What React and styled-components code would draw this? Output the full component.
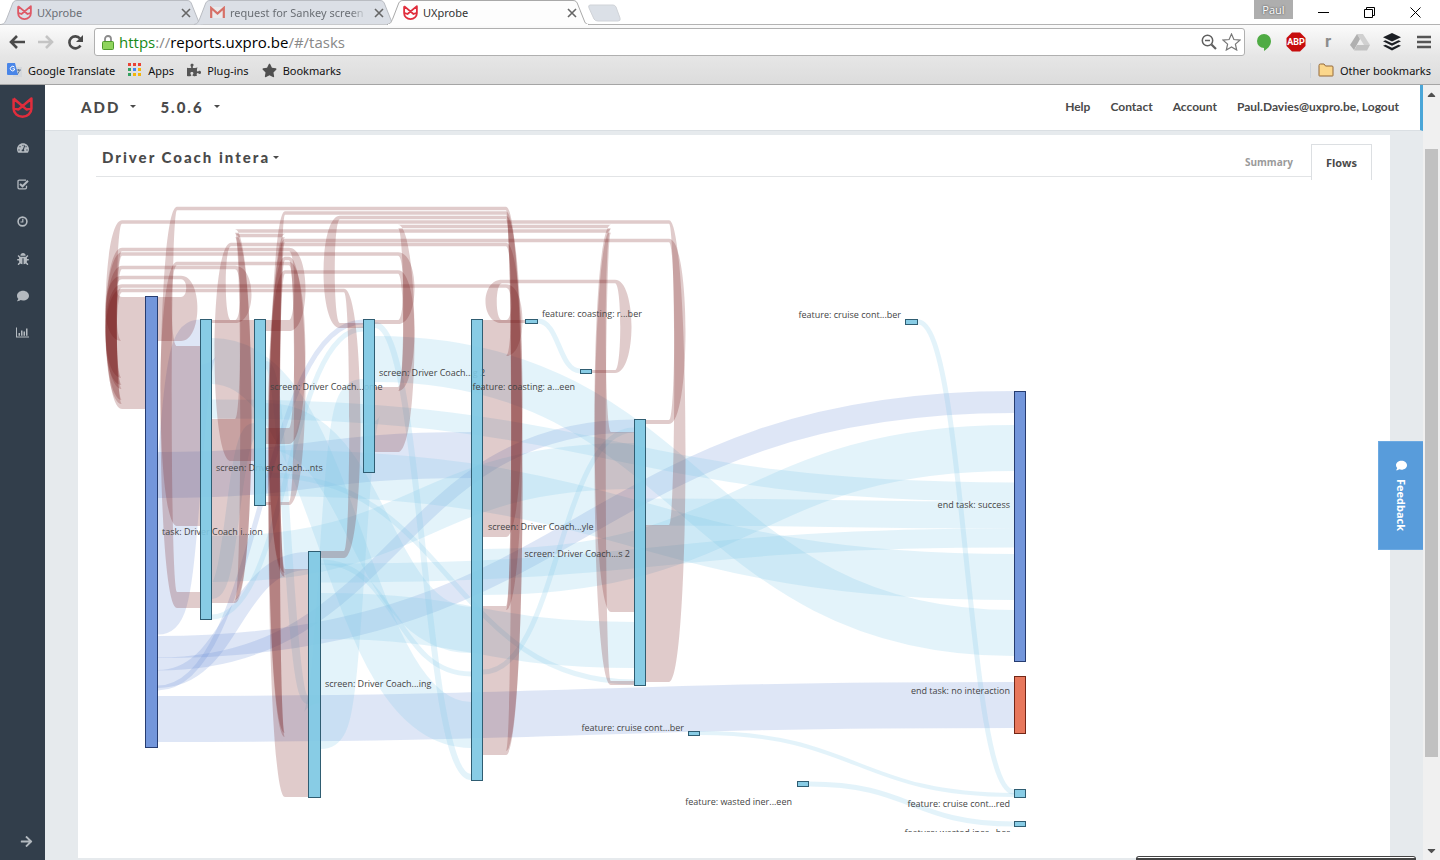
import React from "react";
import styled, { createGlobalStyle } from "styled-components";
import {
  FaTachometerAlt, FaBug, FaComment,
  FaArrowRight, FaPuzzlePiece, FaStar, FaCaretUp, FaCaretDown,
} from "react-icons/fa";

const Global = createGlobalStyle`
  *, *::before, *::after { box-sizing: border-box; }
  body { margin: 0; background: #fff; font-family: "Open Sans", "Noto Sans", sans-serif; }
  button, input { font: inherit; color: inherit; margin: 0; padding: 0; border: 0; background: none; }
  a { color: inherit; text-decoration: none; }
  svg { display: block; flex: none; }
`;

const Window = styled.div`
  height: 100vh;
  display: flex;
  flex-direction: column;
  overflow: hidden;
`;

/* ---------- browser frame ---------- */

const TabStrip = styled.div`
  height: 25px;
  flex: none;
  display: flex;
  align-items: flex-start;
  border-bottom: 1px solid #b3b3b3;
`;

const TabShell = styled.div`
  position: relative;
  width: 202px;
  height: 25px;
  display: flex;
  align-items: center;
  gap: 5px;
  padding: 0 9px 0 17px;
  margin-right: -9px;
  font-size: 11px;
  color: ${(p) => (p.$active ? "#333" : "#6a6e74")};
  z-index: ${(p) => (p.$active ? 2 : 1)};
  & > svg { z-index: 1; opacity: ${(p) => (p.$active ? 1 : 0.75)}; }
`;

const TabShape = styled.span`
  position: absolute;
  inset: 0;
  svg { width: 100%; height: 100%; overflow: visible; }
`;

const TabTitle = styled.span`
  z-index: 1;
  flex: 1;
  font-family: "Noto Sans", sans-serif;
  white-space: nowrap;
  overflow: hidden;
  ${(p) => p.$fade && "mask-image: linear-gradient(90deg, #000 88%, transparent);"}
`;

const IconButton = styled.button`
  z-index: 1;
  display: flex;
  align-items: center;
  justify-content: center;
  width: ${(p) => p.$w || 20}px;
  height: ${(p) => p.$h || 20}px;
  flex: none;
`;

const NewTab = styled(IconButton)`
  margin: 4px 0 0 8px;
`;

const WindowControls = styled.div`
  margin-left: auto;
  display: flex;
  gap: 26px;
  padding-right: 15px;
`;

const UserBadge = styled.button`
  width: 39px;
  height: 19px;
  margin-right: -6px;
  background: #aeaeae;
  color: #fff;
  font-size: 11px;
  line-height: 18px;
  text-shadow: 0 0 2px #333;
`;

const Toolbar = styled.div`
  height: 31px;
  flex: none;
  display: flex;
  align-items: center;
  gap: 9px;
  padding: 3px 6px 0 7px;
  background: linear-gradient(#fbfbfb, #e6e6e6);
`;

const AddressBar = styled.label`
  flex: 1;
  height: 28px;
  display: flex;
  align-items: center;
  gap: 5px;
  padding: 0 3px 0 7px;
  background: #fff;
  border: 1px solid #b0b0b0;
  border-radius: 3px;
`;

const Url = styled.span`
  flex: 1;
  font-size: 15px;
  line-height: 24px;
  color: #888;
  b { font-weight: 400; color: #000; }
  em { font-style: normal; color: #178a17; }
`;

const Extensions = styled.div`
  display: flex;
  gap: 12px;
`;

const Bookmarks = styled.nav`
  height: 29px;
  flex: none;
  display: flex;
  align-items: center;
  gap: 13px;
  padding: 0 9px 0 7px;
  background: linear-gradient(#e6e6e6, #dcdcdc);
  border-bottom: 1px solid #a5a5a5;
  color: #111;
  font-size: 11px;
`;

const Bookmark = styled.a`
  display: flex;
  align-items: center;
  gap: 6px;
  font-family: "Noto Sans", sans-serif;
  ${(p) => p.$end && "margin-left: auto; padding-left: 7px; border-left: 1px solid #cdd3da;"}
`;

/* ---------- page ---------- */

const Page = styled.div`
  position: relative;
  flex: 1;
  min-height: 0;
  display: flex;
  background: #e6eaed;
`;

const Sidebar = styled.nav`
  width: 45px;
  flex: none;
  display: flex;
  flex-direction: column;
  align-items: center;
  background: #323e4b;
  color: #b4bac0;
`;

const SideLogo = styled.a`
  height: 44px;
  display: flex;
  align-items: center;
`;

const SideLink = styled.a`
  display: flex;
  align-items: center;
  justify-content: center;
  width: 45px;
  height: 37px;
  ${(p) => p.$last && "margin-top: auto; padding-left: 7px;"}
`;

const Main = styled.main`
  flex: 1;
  min-width: 0;
  display: flex;
  flex-direction: column;
`;

const TopNav = styled.header`
  height: 46px;
  flex: none;
  display: flex;
  align-items: center;
  padding: 0 21px 2px 36px;
  background: #fff;
  border-right: 3px solid #4aa6d8;
  border-bottom: 1px solid #dadfe3;
  font-family: Lato, sans-serif;
  font-weight: 700;
  color: #4a4a4a;
`;

const Picker = styled.button`
  display: flex;
  align-items: center;
  gap: ${(p) => p.$gap || 10}px;
  margin-right: 24px;
  font-family: Lato, sans-serif;
  font-weight: 900;
  font-size: 15px;
  letter-spacing: 2px;
  color: #4a4a4a;
`;

const Caret = styled.i`
  border: 3px solid transparent;
  border-top-color: #4a4a4a;
  border-bottom: 0;
`;

const NavLinks = styled.div`
  margin-left: auto;
  display: flex;
  gap: 20px;
  font-size: 12px;
`;

const Panel = styled.section`
  flex: 1;
  min-height: 0;
  margin: 4px 33px 2px;
  padding: 9px 18px 0;
  background: #fff;
`;

const PanelHead = styled.div`
  height: 33px;
  display: flex;
  align-items: flex-start;
  justify-content: space-between;
  padding-left: 6px;
  border-bottom: 1px solid #e2e4e6;
`;

const PanelTitle = styled.div`
  padding-top: 4px;
`;

const Tabs = styled.div`
  display: flex;
  align-items: flex-start;
`;

const PageTab = styled.button`
  height: 36px;
  padding: 0 14px 1px;
  font-family: "Open Sans", sans-serif;
  font-weight: 700;
  font-size: ${(p) => (p.$active ? 11 : 10)}px;
  color: ${(p) => (p.$active ? "#4a4a4a" : "#9a9a9a")};
  border: 1px solid ${(p) => (p.$active ? "#dcdfe2" : "transparent")};
  border-bottom: 0;
  background: ${(p) => (p.$active ? "#fff" : "transparent")};
  margin-left: 3px;
`;

const Chart = styled.svg`
  width: 100%;
  height: 655px;
  overflow: hidden;
`;

const NodeLabel = styled.text`
  font-family: "Open Sans", sans-serif;
  font-size: 9px;
  fill: #444;
`;

const Feedback = styled.button`
  position: absolute;
  right: 17px;
  top: 356px;
  width: 45px;
  height: 109px;
  display: flex;
  align-items: center;
  justify-content: center;
  gap: 8px;
  writing-mode: vertical-rl;
  background: #589cdb;
  border: 1px solid #6daae2;
  border-right: 0;
  color: #fff;
  font-size: 11px;
  font-weight: 700;
`;

const StatusBox = styled.div`
  position: absolute;
  right: 24px;
  bottom: 0;
  width: 280px;
  height: 4px;
  background: #fff;
  border: 1px solid #444;
  border-bottom: 2px solid #444;
  border-radius: 3px 3px 0 0;
`;

const ScrollBar = styled.div`
  width: 17px;
  flex: none;
  display: flex;
  flex-direction: column;
  align-items: center;
  justify-content: space-between;
  padding: 3px 0;
  background: #f0f0f0;
  color: #505050;
`;

const Thumb = styled.div`
  width: 13px;
  height: 608px;
  margin-bottom: 40px;
  background: #c1c1c1;
`;

const Fox = ({ size = 21 }) => (
  <svg width={size} height={size} viewBox="0 0 20 20" fill="none" stroke="#e02d3c" strokeWidth="2.4" strokeLinejoin="round">
    <path d="M1.500 1.500V11A8.500 7.800 0 0 0 18.500 11V1.500L6 12L1.500 10.500M1.500 1.500L14 12L18.500 10.500" />
  </svg>
);

const Cross = () => (
  <svg width="10" height="10" viewBox="0 0 10 10" stroke="#666" strokeWidth="1.6"><path d="M1 1l8 8M9 1l-8 8" /></svg>
);

const Gmail = () => (
  <svg width="15" height="13" viewBox="0 0 15 13">
    <rect x="1" y="1" width="13" height="11" fill="#eee" />
    <path d="M1.2 12V2L7.5 7.5L13.8 2V12" fill="none" stroke="#d54b3d" strokeWidth="2.2" />
  </svg>
);

const TickBox = () => (
  <svg width="12" height="11" viewBox="0 0 12 11" fill="none" stroke="currentColor">
    <path d="M9 1.200H2.200Q1 1.200 1 2.400V8.600Q1 9.900 2.200 9.900H8.200Q9.500 9.900 9.500 8.600V6.800" strokeWidth="1.300" />
    <path d="M3 5L5.500 7.300L11 1.800" strokeWidth="2" />
  </svg>
);

const Clock = () => (
  <svg width="11" height="11" viewBox="0 0 11 11" fill="none" stroke="currentColor">
    <circle cx="5.500" cy="5.500" r="4.400" strokeWidth="1.600" />
    <path d="M5.800 2.800V6H3.500" strokeWidth="1.200" />
  </svg>
);

const Bars = () => (
  <svg width="13" height="11" viewBox="0 0 13 11" fill="currentColor">
    <path d="M0 .5H1V9.500H13V10.500H0ZM2.500 6H4V8.800H2.500ZM5 3.500H6.500V8.800H5ZM7.500 4.500H9V8.800H7.500ZM10 1.500H11.500V8.800H10Z" />
  </svg>
);

const BrowserTab = ({ icon, title, active, fade }) => (
  <TabShell $active={active}>
    <TabShape>
      <svg viewBox="0 0 202 25" preserveAspectRatio="none">
        <path d="M1 24.500C5 24 5 22 7 18L12 5C13 2 14 .5 17 .5H187C190 .5 191 2 192 5L198 20C199 23 200 24.500 203 24.500" fill={active ? "#fdfdfd" : "#dbdfe6"} stroke={active ? "#a9a9a9" : "#b9bcc2"} />
        {active && <path d="M2 25H202" stroke="#fdfdfd" strokeWidth="2" />}
      </svg>
    </TabShape>
    {icon}
    <TabTitle $fade={fade}>{title}</TabTitle>
    <IconButton aria-label="Close tab" $w={14}><Cross /></IconButton>
  </TabShell>
);

/* ---------- flow diagram ---------- */

const SKY = "#7ec8e3";
const ROYAL = "#678dd8";
const CORAL = "#e56b4e";
const MAROON = "#721313";
const SKY_FLOW = "#7ecaea";

/* x, y, width, height, colour, border, label, label x, label y, anchor */
const NODES = [
  [145, 296, 12, 451, ROYAL, "#263c70", "task: Driver Coach i...ion", 162, 535],
  [200, 319, 11, 300, SKY, "#2f5d72", "screen: Driver Coach...nts", 216, 471],
  [254, 319, 11, 186, SKY, "#2f5d72", "screen: Driver Coach...ome", 270, 390],
  [308, 551, 12, 246, SKY, "#2f5d72", "screen: Driver Coach...ing", 325, 687],
  [363, 319, 11, 153, SKY, "#2f5d72", "screen: Driver Coach...g 2", 379, 376],
  [471, 319, 11, 461, SKY, "#2f5d72", "screen: Driver Coach...yle", 488, 530],
  [525, 319, 12, 4, SKY, "#2f5d72", "feature: coasting: r...ber", 542, 317],
  [580, 369, 11, 4, SKY, "#2f5d72", "feature: coasting: a...een", 575, 390, "end"],
  [634, 419, 11, 266, SKY, "#2f5d72", "screen: Driver Coach...s 2", 630, 557, "end"],
  [688, 731, 11, 4, SKY, "#2f5d72", "feature: cruise cont...ber", 684, 731, "end"],
  [797, 781, 11, 5, SKY, "#2f5d72", "feature: wasted iner...een", 792, 805, "end"],
  [905, 319, 12, 5, SKY, "#2f5d72", "feature: cruise cont...ber", 901, 318, "end"],
  [1014, 391, 11, 270, ROYAL, "#263c70", "end task: success", 1010, 508, "end"],
  [1014, 676, 11, 57, CORAL, "#732616", "end task: no interaction", 1010, 694, "end"],
  [1014, 789, 11, 8, SKY, "#2f5d72", "feature: cruise cont...red", 1010, 807, "end"],
  [1014, 821, 11, 5, SKY, "#2f5d72", "feature: wasted iner...ber", 1010, 836, "end"],
];

/* x1, y1, x2, y2, thickness, colour */
const FLOWS = [
  [158, 612, 200, 342, 45, ROYAL],
  [158, 475, 471, 455, 46, ROYAL],
  [158, 647, 1014, 402, 22, ROYAL],
  [158, 664, 634, 426, 13, ROYAL],
  [158, 679, 308, 561, 18, ROYAL],
  [158, 688, 363, 322, 5, ROYAL],
  [158, 719, 1014, 705, 46, ROYAL],
  [212, 361, 471, 725, 46, SKY_FLOW],
  [212, 409, 1014, 492, 19, SKY_FLOW],
  [212, 559, 634, 466, 46, SKY_FLOW],
  [212, 617, 363, 329, 5, SKY_FLOW],
  [212, 592, 254, 430, 14, SKY_FLOW],
  [266, 426, 471, 630, 46, SKY_FLOW],
  [266, 473, 1014, 577, 46, SKY_FLOW],
  [266, 475, 634, 682, 5, SKY_FLOW],
  [266, 365, 308, 700, 8, SKY_FLOW],
  [321, 562, 471, 674, 5, SKY_FLOW],
  [321, 573, 1014, 538, 19, SKY_FLOW],
  [321, 616, 634, 645, 46, SKY_FLOW],
  [321, 726, 363, 402, 46, SKY_FLOW],
  [375, 359, 1014, 633, 46, SKY_FLOW],
  [375, 325, 471, 777, 6, SKY_FLOW],
  [483, 572, 1014, 448, 46, SKY_FLOW],
  [483, 672, 634, 430, 5, SKY_FLOW],
  [646, 512, 1014, 515, 27, SKY_FLOW],
  [538, 321, 580, 371, 5, SKY_FLOW],
  [700, 733, 1014, 795, 4, SKY_FLOW],
  [809, 784, 1014, 824, 5, SKY_FLOW],
  [918, 322, 1014, 792, 5, SKY_FLOW],
];

/* source x, source top, source bottom, target x, target top, target bottom, centre of the return line */
const RETURNS = [
  [158, 297, 341, 145, 297, 341, 277.5],
  [483, 320, 356, 145, 341, 378, 286],
  [321, 551, 558, 145, 378, 385, 290.5],
  [212, 320, 323, 145, 385, 389, 267.5],
  [266, 320, 331, 145, 389, 400, 249.5],
  [375, 320, 324, 145, 400, 404, 254],
  [646, 525, 682, 145, 404, 409, 222],
  [266, 428, 444, 200, 346, 526, 263.5],
  [483, 751, 755, 200, 592, 608, 208.5],
  [483, 356, 537, 254, 320, 461, 244.5],
  [375, 387, 391, 308, 569, 573, 272],
  [266, 502, 505, 308, 573, 577, 258.5],
  [212, 419, 600, 308, 577, 733, 235.5],
  [646, 420, 424, 308, 733, 737, 240.5],
  [483, 610, 751, 308, 737, 797, 213],
  [483, 606, 610, 363, 323, 328, 217.5],
  [375, 391, 452, 634, 432, 612, 226.5],
  [212, 600, 603, 634, 681, 685, 231],
  [592, 370, 373, 525, 320, 323, 281.5],
];

const flowPath = ([x1, y1, x2, y2]) => {
  const m = (x1 + x2) / 2;
  return `M${x1} ${y1}C${m} ${y1} ${m} ${y2} ${x2} ${y2}`;
};

/* A band that leaves on the right, loops over the top and comes back on the left. */
const returnPath = ([sx, s1, s2, tx, t1, t2, line]) => {
  const s = sx + 23;
  const t = tx - 23;
  const top = line - 1.75;
  const low = line + 1.75;
  return `M${sx} ${s2}H${s}C${s + 22} ${s2} ${s + 22} ${top} ${s} ${top}H${t}` +
    `C${t - 22} ${top} ${t - 22} ${t2} ${t} ${t2}H${tx}V${t1}H${t}` +
    `C${t - 7} ${t1} ${t - 7} ${low} ${t} ${low}H${s}` +
    `C${s + 7} ${low} ${s + 7} ${s1} ${s} ${s1}H${sx}Z`;
};

const Sankey = () => (
  <Chart role="img" aria-label="Task flow diagram">
    <clipPath id="flowArea"><rect x="158" y="177" width="856" height="660" /></clipPath>
    <g transform="translate(-96 -177)">
      <g clipPath="url(#flowArea)">
        {FLOWS.map((f, i) => (
          <path key={i} d={flowPath(f)} fill="none" stroke={f[5]} strokeWidth={f[4]} strokeOpacity="0.22" />
        ))}
      </g>
      {RETURNS.map((r, i) => (
        <path key={i} d={returnPath(r)} fill={MAROON} fillOpacity="0.22" />
      ))}
      {NODES.map(([x, y, w, h, fill, edge, label, lx, ly, anchor], i) => (
        <g key={i}>
          <rect x={x + 0.5} y={y + 0.5} width={w} height={h} fill={fill} fillOpacity="0.92" stroke={edge} />
          <NodeLabel x={lx} y={ly} textAnchor={anchor || "start"}>{label}</NodeLabel>
        </g>
      ))}
    </g>
  </Chart>
);

const SIDE = [
  ["Dashboard", FaTachometerAlt], ["Tasks", TickBox], ["Time", Clock],
  ["Bugs", FaBug], ["Comments", FaComment], ["Charts", Bars],
];

export default function App() {
  return (
    <Window>
      <Global />
      <TabStrip>
        <BrowserTab icon={<Fox size={15} />} title="UXprobe" />
        <BrowserTab icon={<Gmail />} title="request for Sankey screen" fade />
        <BrowserTab icon={<Fox size={15} />} title="UXprobe" active />
        <NewTab aria-label="New tab" $w={34} $h={18}>
          <svg width="34" height="18" viewBox="0 0 34 18"><path d="M3 1H26Q28 1 29 3L33 14Q34 17 31 17H11Q8 17 7 15L2 4Q1 1 3 1Z" fill="#dbe0e7" stroke="#d0d3d8" /></svg>
        </NewTab>
        <WindowControls>
          <UserBadge>Paul</UserBadge>
          <IconButton aria-label="Minimize" $h={24}><svg width="11" height="11" viewBox="0 0 11 11"><path d="M0 5.500H11" stroke="#000" /></svg></IconButton>
          <IconButton aria-label="Restore" $h={24}><svg width="11" height="11" viewBox="0 0 11 11" fill="none" stroke="#000"><path d="M.5 2.500H8.500V10.500H.5ZM2.500 2.500V.5H10.500V8.500H8.500" /></svg></IconButton>
          <IconButton aria-label="Close" $h={24}><svg width="11" height="11" viewBox="0 0 11 11" stroke="#000"><path d="M.5.5l10 10M10.500.5l-10 10" /></svg></IconButton>
        </WindowControls>
      </TabStrip>

      <Toolbar>
        <IconButton aria-label="Back"><svg width="18" height="16" viewBox="0 0 18 16" fill="none" stroke="#4a4a4a" strokeWidth="2.600"><path d="M17 8H3M9 2L3 8l6 6" /></svg></IconButton>
        <IconButton aria-label="Forward"><svg width="18" height="16" viewBox="0 0 18 16" fill="none" stroke="#c4c4c4" strokeWidth="2.600"><path d="M1 8H15M9 2l6 6-6 6" /></svg></IconButton>
        <IconButton aria-label="Reload"><svg width="17" height="17" viewBox="0 0 17 17"><path d="M13.500 11.500A6 6 0 1 1 13 4.500" fill="none" stroke="#4a4a4a" strokeWidth="2.600" /><path d="M16 1V8H9Z" fill="#4a4a4a" /></svg></IconButton>
        <AddressBar>
          <svg width="12" height="15" viewBox="0 0 12 15"><path d="M3 7V4A3 3 0 0 1 9 4V7" fill="none" stroke="#8b8b8b" strokeWidth="1.800" /><rect x=".5" y="6.500" width="11" height="8" rx="1" fill="#8fd45d" stroke="#4f9a2c" /></svg>
          <Url><em>https</em>://<b>reports.uxpro.be</b>/#/tasks</Url>
          <svg width="16" height="16" viewBox="0 0 16 16" fill="none" stroke="#606060"><circle cx="6.500" cy="6.500" r="5.200" strokeWidth="1.500" /><path d="M4 6.500h5" strokeWidth="1.500" /><path d="M10.500 10.500l4.500 4.500" strokeWidth="2.200" /></svg>
          <svg width="19" height="18" viewBox="0 0 19 18" fill="#fff" stroke="#777" strokeWidth="1.200"><path d="M9.500 1l2.400 5.500 6 .6-4.500 4 1.300 5.900-5.200-3.100L4.300 17l1.300-5.900-4.500-4 6-.6z" /></svg>
        </AddressBar>
        <Extensions>
          <IconButton aria-label="Hangouts"><svg width="16" height="19" viewBox="0 0 16 19"><path d="M8 1a7 7 0 0 1 7 7c0 5-4 8-7 10v-3A7 7 0 0 1 8 1z" fill="#4fab44" /></svg></IconButton>
          <IconButton aria-label="Adblock"><svg width="20" height="20" viewBox="0 0 20 20"><path d="M6 .5h8L19.500 6v8L14 19.500H6L.5 14V6z" fill="#c70d0d" /><text x="10" y="13" fontSize="9" fontWeight="700" fill="#fff" textAnchor="middle" fontFamily="Roboto">ABP</text></svg></IconButton>
          <IconButton aria-label="Reader"><svg width="20" height="20" viewBox="0 0 20 20"><text x="10" y="15" fontSize="17" fontWeight="700" fill="#8c8c8c" textAnchor="middle" fontFamily="Roboto">r</text></svg></IconButton>
          <IconButton aria-label="Drive"><svg width="20" height="17" viewBox="0 0 20 17"><path d="M7 0h6l7 11h-6z" fill="#d0d0d0" /><path d="M7 0l3 5-6 11-4-5z" fill="#b0b0b0" /><path d="M7 11h13l-3 5.500H4z" fill="#c2c2c2" /></svg></IconButton>
          <IconButton aria-label="Buffer"><svg width="18" height="18" viewBox="0 0 18 18" fill="#1c1f24"><path d="M9 0l9 4.200-9 4.200-9-4.200zM0 8.300l2.500-1.100L9 10.200l6.500-3L18 8.300l-9 4.400zM0 12.800l2.500-1.100 6.500 3 6.500-3 2.500 1.100-9 4.700z" /></svg></IconButton>
          <IconButton aria-label="Menu"><svg width="14" height="14" viewBox="0 0 14 14" stroke="#555" strokeWidth="2.600"><path d="M0 2h14M0 7h14M0 12h14" /></svg></IconButton>
        </Extensions>
      </Toolbar>

      <Bookmarks>
        <Bookmark href="#">
          <svg width="15" height="15" viewBox="0 0 15 15"><rect x="6" y="4" width="9" height="10" fill="#d5d8dc" /><path d="M9 7h5M11.500 6v2M10 12l3-5" stroke="#6b7f95" /><path d="M0 1Q0 0 1 0H8L11 12H1Q0 12 0 11z" fill="#4a86e8" /><path d="M7.500 4.200A2.300 2.300 0 1 0 7.500 7V5.800H5.500" fill="none" stroke="#fff" /></svg>
          Google Translate
        </Bookmark>
        <Bookmark href="#">
          <svg width="14" height="14" viewBox="0 0 14 14">
            {["#e94335", "#e94335", "#e94335", "#34a060", "#4285f4", "#f2b50b", "#34a060", "#f2b50b", "#f2b50b"].map((c, i) => (
              <rect key={i} x={(i % 3) * 5} y={Math.floor(i / 3) * 5} width="3" height="3" fill={c} />
            ))}
          </svg>
          Apps
        </Bookmark>
        <Bookmark href="#"><FaPuzzlePiece size={14} color="#555" />Plug-ins</Bookmark>
        <Bookmark href="#"><FaStar size={15} color="#4f4f4f" />Bookmarks</Bookmark>
        <Bookmark href="#" $end>
          <svg width="16" height="14" viewBox="0 0 16 14"><path d="M1 12.500V2.500Q1 1 2.500 1H6L7.500 3H14Q15 3 15 4V12.500Q15 13 14.500 13H1.500Q1 13 1 12.500Z" fill="#fbd78c" stroke="#93683a" /></svg>
          Other bookmarks
        </Bookmark>
      </Bookmarks>

      <Page>
        <Sidebar>
          <SideLogo href="#" aria-label="UXprobe"><Fox /></SideLogo>
          {SIDE.map(([name, Icon]) => (
            <SideLink key={name} href="#" aria-label={name}><Icon size={12} /></SideLink>
          ))}
          <SideLink href="#" aria-label="Expand" $last><FaArrowRight size={13} /></SideLink>
        </Sidebar>
        <Main>
          <TopNav>
            <Picker>ADD <Caret /></Picker>
            <Picker>5.0.6 <Caret /></Picker>
            <NavLinks>
              <a href="#help">Help</a>
              <a href="#contact">Contact</a>
              <a href="#account">Account</a>
              <a href="#logout">Paul.Davies@uxpro.be, Logout</a>
            </NavLinks>
          </TopNav>
          <Panel>
            <PanelHead>
              <PanelTitle>
                <Picker $gap={3}>Driver Coach intera <Caret /></Picker>
              </PanelTitle>
              <Tabs>
                <PageTab>Summary</PageTab>
                <PageTab $active>Flows</PageTab>
              </Tabs>
            </PanelHead>
            <Sankey />
          </Panel>
        </Main>
        <ScrollBar>
          <FaCaretUp size={13} />
          <Thumb />
          <FaCaretDown size={13} />
        </ScrollBar>
        <Feedback><FaComment size={11} />Feedback</Feedback>
        <StatusBox />
      </Page>
    </Window>
  );
}
